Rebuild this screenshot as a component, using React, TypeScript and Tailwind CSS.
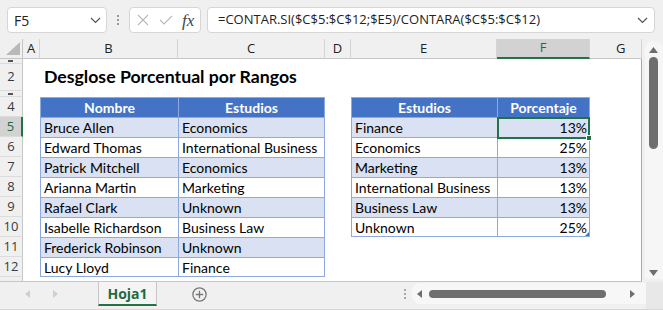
import React from "react";

const names: [string, string][] = [
  ["Bruce Allen", "Economics"],
  ["Edward Thomas", "International Business"],
  ["Patrick Mitchell", "Economics"],
  ["Arianna Martin", "Marketing"],
  ["Rafael Clark", "Unknown"],
  ["Isabelle Richardson", "Business Law"],
  ["Frederick Robinson", "Unknown"],
  ["Lucy Lloyd", "Finance"],
];

const pct: [string, string][] = [
  ["Finance", "13%"],
  ["Economics", "25%"],
  ["Marketing", "13%"],
  ["International Business", "13%"],
  ["Business Law", "13%"],
  ["Unknown", "25%"],
];

const cellFont = { fontFamily: "Lato, 'Liberation Sans', sans-serif" };
const uiFont = { fontFamily: "'Open Sans', 'Liberation Sans', sans-serif" };

function RowHead({ label, active, h, dash }: { label?: string; active?: boolean; h: string; dash?: boolean }) {
  return (
    <div
      className={`${h} w-[23px] shrink-0 flex items-center justify-center text-[13px] border-b border-b-[#dcdcdc] ${
        active ? "bg-[#d2d2d2] text-[#1e6b41] border-r-2 border-r-[#217346]" : "bg-[#f0f0f0] text-[#3a3a3a] border-r border-r-[#c6c6c6]"
      }`}
      style={uiFont}
    >
      {dash ? <div className="w-[5px] h-[2px] bg-[#555] -translate-x-[1px]" /> : label}
    </div>
  );
}

function ColHead({ w, label, active, extra }: { w: string; label: string; active?: boolean; extra?: string }) {
  return (
    <div
      className={`${w} h-full shrink-0 flex items-center text-[13px] border-r border-r-[#d4d4d4] ${
        active ? "bg-[#d2d2d2] text-[#1e6b41] border-b-2 border-b-[#217346]" : "bg-[#f0f0f0] text-[#222] border-b border-b-[#c6c6c6]"
      } ${extra ?? "justify-center"}`}
      style={uiFont}
    >
      {label}
    </div>
  );
}

export default function App() {
  return (
    <div className="w-[663px] h-[310px] bg-[#f0f0f0] flex flex-col overflow-hidden select-none">
      {/* Formula bar */}
      <div className="h-[39px] shrink-0 flex items-start pt-[7px] pl-[7px]">
        <div className="w-[100px] h-[26px] bg-white border border-[#d6d6d6] rounded-[4px] flex items-center justify-between pl-[6px] pr-[5px] text-[14px] text-[#222]" style={uiFont}>
          <span>F5</span>
          <svg width="11" height="7" viewBox="0 0 11 7">
            <path d="M1 1 L5.5 5.5 L10 1" fill="none" stroke="#555" strokeWidth="1.2" />
          </svg>
        </div>
        <div className="w-[22px] h-[26px] flex flex-col items-center justify-center gap-[2px]">
          <div className="w-[2px] h-[2px] bg-[#9a9a9a]" />
          <div className="w-[2px] h-[2px] bg-[#9a9a9a]" />
          <div className="w-[2px] h-[2px] bg-[#9a9a9a]" />
        </div>
        <div className="w-[72px] h-[26px] bg-white border border-[#d6d6d6] rounded-[4px] flex items-center pl-[7px]">
          <svg width="12" height="12" viewBox="0 0 12 12">
            <path d="M1 1 L11 11 M11 1 L1 11" stroke="#b8b8b8" strokeWidth="1.1" />
          </svg>
          <svg width="14" height="12" viewBox="0 0 14 12" className="ml-[10px]">
            <path d="M1 6 L5 10 L13 2" fill="none" stroke="#b8b8b8" strokeWidth="1.1" />
          </svg>
          <span className="ml-[9px] text-[17px] italic text-[#444] leading-none" style={{ fontFamily: "'Liberation Serif', serif" }}>
            fx
          </span>
        </div>
        <div className="ml-[6px] w-[448px] h-[26px] bg-white border border-[#d6d6d6] rounded-[4px] flex items-center justify-between pl-[10px] pr-[6px] text-[13px] text-[#222]" style={uiFont}>
          <span>=CONTAR.SI($C$5:$C$12;$E5)/CONTARA($C$5:$C$12)</span>
          <svg width="11" height="7" viewBox="0 0 11 7">
            <path d="M1 1 L5.5 5.5 L10 1" fill="none" stroke="#555" strokeWidth="1.2" />
          </svg>
        </div>
      </div>

      {/* Grid + vertical scrollbar */}
      <div className="h-[243px] shrink-0 flex">
        <div className="w-[642px] shrink-0 flex flex-col border-b border-[#c6c6c6]">
          {/* column headers */}
          <div className="h-[20px] shrink-0 flex">
            <div className="w-[23px] h-full shrink-0 bg-[#f0f0f0] border-r border-r-[#c6c6c6] border-b border-b-[#c6c6c6] flex items-end justify-end pr-[2px] pb-[3px]">
              <svg width="14" height="13" viewBox="0 0 14 13">
                <polygon points="14,0 14,13 0,13" fill="#b9b9b9" />
              </svg>
            </div>
            <ColHead w="w-[17px]" label="A" />
            <ColHead w="w-[138px]" label="B" />
            <ColHead w="w-[147px]" label="C" />
            <ColHead w="w-[26px]" label="D" />
            <ColHead w="w-[146px]" label="E" />
            <ColHead w="w-[93px]" label="F" active />
            <ColHead w="w-[52px]" label="G" extra="justify-start pl-[26px] border-r-[#9a9a9a]" />
          </div>

          {/* body */}
          <div className="flex-1 flex flex-col bg-white border-r border-[#a8a8a8] overflow-hidden" style={cellFont}>
            {/* row 1 */}
            <div className="h-[5px] shrink-0 flex">
              <RowHead h="h-[5px]" dash />
            </div>
            {/* row 2 */}
            <div className="h-[27px] shrink-0 flex">
              <RowHead h="h-[27px]" label="2" />
              <div className="w-[17px] shrink-0" />
              <div className="flex items-center pl-[4px] text-[17.7px] font-bold text-black whitespace-nowrap">
                Desglose Porcentual por Rangos
              </div>
            </div>
            {/* row 3 */}
            <div className="h-[6px] shrink-0 flex">
              <RowHead h="h-[6px]" dash />
            </div>
            {/* row 4 headers */}
            <div className="h-[20px] shrink-0 flex text-[14px]">
              <RowHead h="h-[20px]" label="4" />
              <div className="w-[17px] shrink-0" />
              <div className="w-[138px] shrink-0 bg-[#4472c4] border-l border-t border-[#8ea9db] flex items-center justify-center font-bold text-white">
                Nombre
              </div>
              <div className="w-[147px] shrink-0 bg-[#4472c4] border-l border-r border-t border-[#8ea9db] flex items-center justify-center font-bold text-white">
                Estudios
              </div>
              <div className="w-[26px] shrink-0" />
              <div className="w-[146px] shrink-0 bg-[#4472c4] border-l border-t border-[#8ea9db] flex items-center justify-center font-bold text-white">
                Estudios
              </div>
              <div className="w-[93px] shrink-0 bg-[#4472c4] border-l border-r border-t border-[#8ea9db] flex items-center justify-center font-bold text-white">
                Porcentaje
              </div>
            </div>
            {/* data rows */}
            {names.map(([n, s], i) => {
              const band = i % 2 === 0;
              const bg = band ? "bg-[#d9e1f2]" : "bg-white";
              const last = i === names.length - 1;
              const p = pct[i];
              const pLast = i === pct.length - 1;
              return (
                <div key={i} className="h-[20px] shrink-0 flex text-[14px] text-black">
                  <RowHead h="h-[20px]" label={String(i + 5)} active={i === 0} />
                  <div className="w-[17px] shrink-0" />
                  <div className={`w-[138px] shrink-0 ${bg} border-l border-t ${last ? "border-b" : ""} border-[#8ea9db] flex items-center pl-[3px] whitespace-nowrap`}>
                    {n}
                  </div>
                  <div className={`w-[147px] shrink-0 ${bg} border-l border-r border-t ${last ? "border-b" : ""} border-[#8ea9db] flex items-center pl-[3px] whitespace-nowrap`}>
                    {s}
                  </div>
                  <div className="w-[26px] shrink-0" />
                  {p ? (
                    <>
                      <div className={`w-[146px] shrink-0 ${bg} border-l border-t ${pLast ? "border-b" : ""} border-[#8ea9db] flex items-center pl-[3px] whitespace-nowrap`}>
                        {p[0]}
                      </div>
                      <div className={`relative w-[93px] shrink-0 ${bg} border-l border-r border-t ${pLast ? "border-b" : ""} border-[#8ea9db] flex items-center justify-end pr-[2px]`}>
                        {p[1]}
                        {i === 0 && (
                          <div className="absolute z-10 -left-[1px] -top-[1px] -right-[1px] -bottom-[2px] border-2 border-[#217346]">
                            <div className="absolute -right-[4px] -bottom-[4px] w-[6px] h-[6px] bg-[#217346] border border-white" />
                          </div>
                        )}
                        {pLast && (
                          <svg width="4" height="4" viewBox="0 0 4 4" className="absolute right-0 bottom-0">
                            <polygon points="4,0 4,4 0,4" fill="#4472c4" />
                          </svg>
                        )}
                      </div>
                    </>
                  ) : null}
                </div>
              );
            })}
            {/* row 13 partial */}
            <div className="h-[5px] shrink-0 flex">
              <RowHead h="h-[5px]" />
            </div>
          </div>
        </div>

        {/* vertical scrollbar */}
        <div className="w-[21px] shrink-0 flex flex-col items-center pt-[2px]">
          <div className="w-[18px] h-[238px] ml-[2px] rounded-t-[8px] bg-[#f6f6f6] flex flex-col items-center pt-[6px]">
            <svg width="9" height="6" viewBox="0 0 9 6">
              <polygon points="4.5,0 9,6 0,6" fill="#6e6e6e" />
            </svg>
            <div className="mt-[4px] w-[9px] h-[92px] rounded-full bg-[#6e6e6e]" />
            <div className="flex-1" />
            <svg width="9" height="6" viewBox="0 0 9 6" className="mb-[3px]">
              <polygon points="0,0 9,0 4.5,6" fill="#6e6e6e" />
            </svg>
          </div>
        </div>
      </div>

      {/* Tab bar */}
      <div className="flex-1 flex items-start border-b border-[#d6d6d6] bg-[#f0f0f0]">
        <div className="h-[24px] w-[98px] shrink-0 flex items-center">
          <svg width="5" height="8" viewBox="0 0 5 8" className="ml-[25px]">
            <polygon points="5,0 5,8 0,4" fill="#cfcfcf" />
          </svg>
          <svg width="5" height="8" viewBox="0 0 5 8" className="ml-[23px]">
            <polygon points="0,0 5,4 0,8" fill="#cfcfcf" />
          </svg>
        </div>
        <div className="w-[59px] h-[24px] shrink-0 bg-[#f4f4f4] border-l border-r border-[#c6c6c6] border-b-2 border-b-[#217346] flex items-center justify-center text-[14px] font-bold text-[#1e6b41]" style={uiFont}>
          Hoja1
        </div>
        <div className="h-[24px] w-[84px] shrink-0 flex items-center justify-center">
          <svg width="15" height="15" viewBox="0 0 15 15">
            <circle cx="7.5" cy="7.5" r="6.6" fill="none" stroke="#777" strokeWidth="1.3" />
            <path d="M7.5 3.8 V11.2 M3.8 7.5 H11.2" stroke="#777" strokeWidth="1.3" />
          </svg>
        </div>
        <div className="flex-1" />
        <div className="h-[24px] w-[14px] shrink-0 flex flex-col items-center justify-center gap-[2px]">
          <div className="w-[2px] h-[2px] bg-[#a8a8a8]" />
          <div className="w-[2px] h-[2px] bg-[#a8a8a8]" />
          <div className="w-[2px] h-[2px] bg-[#a8a8a8]" />
        </div>
        <div className="w-[234px] h-[21px] mt-[1px] shrink-0 rounded-l-[8px] bg-[#f7f7f7] flex items-center px-[5px]">
          <svg width="5" height="8" viewBox="0 0 5 8">
            <polygon points="5,0 5,8 0,4" fill="#6e6e6e" />
          </svg>
          <div className="ml-[7px] w-[177px] h-[8px] rounded-full bg-[#6e6e6e]" />
          <div className="flex-1" />
          <svg width="5" height="8" viewBox="0 0 5 8" className="mr-[6px]">
            <polygon points="0,0 5,4 0,8" fill="#6e6e6e" />
          </svg>
        </div>
        <div className="w-[17px] shrink-0 h-full bg-[#e8e8e8]" />
      </div>
    </div>
  );
}
